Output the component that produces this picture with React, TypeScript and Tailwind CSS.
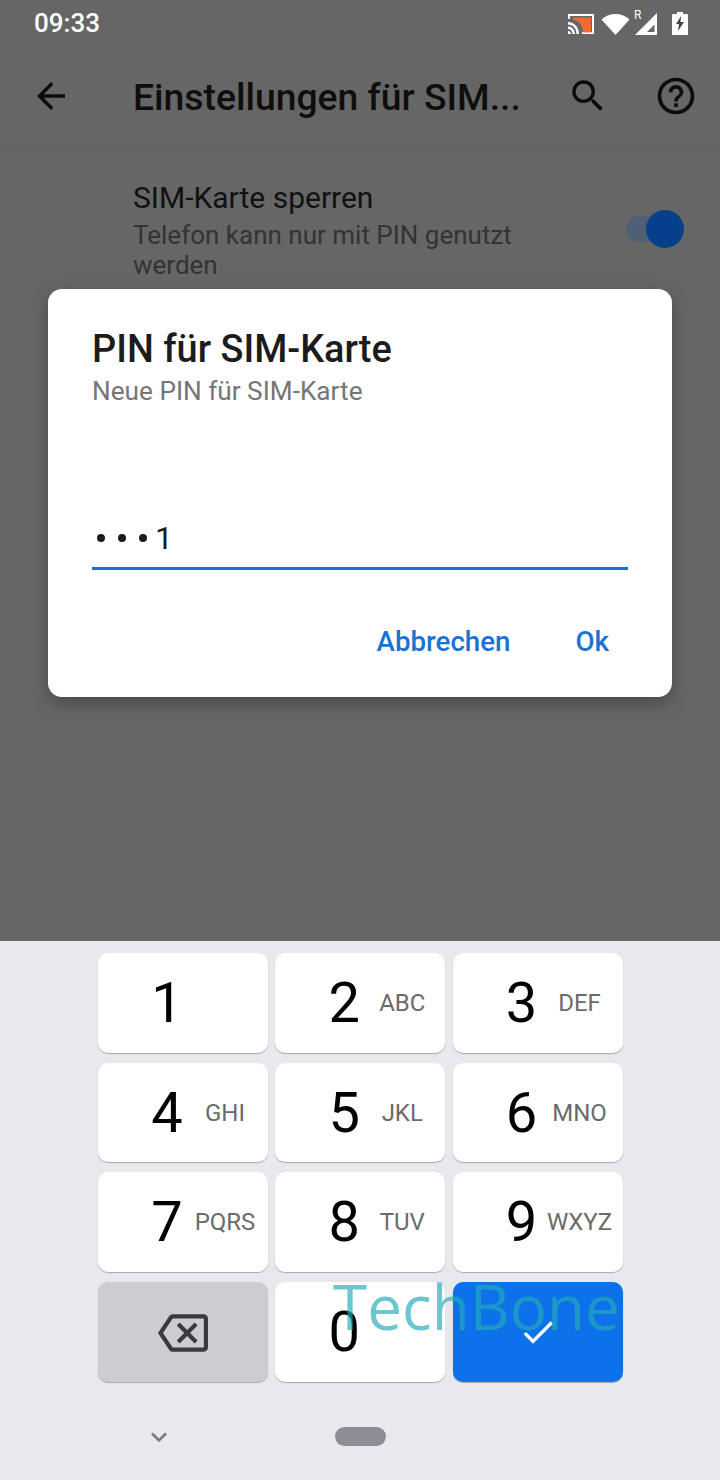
import { MdArrowBack, MdCheck, MdHelpOutline, MdKeyboardArrowDown, MdOutlineBackspace, MdSearch } from "react-icons/md";

const keys = [
  { digit: "1", label: "" },
  { digit: "2", label: "ABC" },
  { digit: "3", label: "DEF" },
  { digit: "4", label: "GHI" },
  { digit: "5", label: "JKL" },
  { digit: "6", label: "MNO" },
  { digit: "7", label: "PQRS" },
  { digit: "8", label: "TUV" },
  { digit: "9", label: "WXYZ" },
];

function StatusIcons() {
  return (
    <div className="flex items-center">
      {/* cast */}
      <svg width="28" height="22" viewBox="0 0 28 22" className="mr-[6px]">
        <path d="M1 1h26v20H15v-2h10V3H3v3H1z" fill="#fff" />
        <path d="M6 4.500h18v15H16C16 12 12 7.500 6 7z" fill="#f26a2e" />
        <path d="M1 9c6 0 11 5 11 12h-2.500C9.500 15.500 6 11.500 1 11.500zM1 13.500c4 0 7 3.500 7 7.500H5.500c0-3-2-5-4.500-5zM1 18c1.700 0 3 1.300 3 3H1z" fill="#fff" />
      </svg>
      {/* wifi */}
      <svg width="29" height="22" viewBox="0 0 29 22" className="mr-[4px]">
        <path d="M0.500 6.500C4 3 9 1 14.500 1S25 3 28.500 6.500L14.500 22z" fill="#fff" />
      </svg>
      {/* roaming signal */}
      <div className="relative mr-[14px] h-[24px] w-[24px]">
        <span className="absolute left-0 top-[-3px] font-['Roboto',sans-serif] text-[12px] leading-[12px] text-white">R</span>
        <svg width="24" height="24" viewBox="0 0 24 24" className="absolute left-0 top-0">
          <path d="M1 23 23 1v22z" fill="#fff" />
          <path d="M13 20 20.500 12.500V20z" fill="#666" />
        </svg>
      </div>
      {/* battery charging */}
      <svg width="16" height="23" viewBox="0 0 16 23">
        <path d="M5 0h6v2h4a1 1 0 0 1 1 1v19a1 1 0 0 1-1 1H1a1 1 0 0 1-1-1V3a1 1 0 0 1 1-1h4z" fill="#fff" />
        <path d="M9 4 4 12h3l-1 7 6-9H8.500z" fill="#444" />
      </svg>
    </div>
  );
}

function Key({ digit, label }: { digit: string; label: string }) {
  return (
    <div className="flex h-[99.700px] items-center rounded-[10px] bg-white shadow-[0_1px_1px_#a9a9ad]">
      <span className="ml-[49px] w-[40px] text-center text-[56px] leading-none text-black">{digit}</span>
      <span className="w-[76px] text-center text-[24px] text-[#6b6b6b]">{label}</span>
    </div>
  );
}

export default function App() {
  return (
    <div className="relative flex h-[1480px] w-[720px] flex-col overflow-hidden bg-[#666666] font-['Roboto',sans-serif]">
      {/* dimmed settings page */}
      <div className="h-[941px]">
        <div className="flex h-[46px] items-center justify-between pl-[34px] pr-[32px] pt-[1px]">
          <span className="text-[26px] font-medium text-white">09:33</span>
          <StatusIcons />
        </div>
        <div className="flex h-[103px] items-center border-b border-[#5f5f5f] pb-[2px]">
          <MdArrowBack className="ml-[30px] text-[42px] text-[#0c0c0c]" />
          <span className="ml-[61px] w-[420px] pt-[3px] text-[37.300px] font-medium leading-none text-[#0e0e0e]">
            Einstellungen für SIM...
          </span>
          <MdSearch className="ml-[14px] text-[42px] text-[#0c0c0c]" />
          <MdHelpOutline className="ml-[45px] text-[44px] text-[#0c0c0c]" />
        </div>
        <div className="flex items-start pl-[133px] pr-[36px] pt-[30px]">
          <div className="w-[400px]">
            <div className="text-[30px] leading-[38px] text-[#111111]">SIM-Karte sperren</div>
            <div className="mt-[3px] text-[26px] leading-[30px] text-[#333333]">
              Telefon kann nur mit PIN genutzt werden
            </div>
          </div>
          <div className="relative ml-auto mt-[37px] h-[26px] w-[58px]">
            <div className="h-[26px] w-[46px] rounded-full bg-[#4f6076]" />
            <div className="absolute right-0 top-[-6px] h-[38px] w-[38px] rounded-full bg-[#06408a]" />
          </div>
        </div>
      </div>

      {/* keyboard */}
      <div className="flex h-[539px] flex-col bg-[#e8e8ed]">
        <div className="grid grid-cols-[170px_170px_170px] gap-x-[7.250px] gap-y-[10px] pl-[98px] pt-[12px]">
          {keys.map((key) => (
            <Key key={key.digit} digit={key.digit} label={key.label} />
          ))}
          <div className="flex h-[99.700px] items-center justify-center rounded-[10px] bg-[#cccdd2] pt-[3px] shadow-[0_1px_1px_#a9a9ad]">
            <MdOutlineBackspace className="text-[50px] text-[#3a3a3e]" />
          </div>
          <Key digit="0" label="" />
          <div className="flex h-[99.700px] items-center justify-center rounded-[10px] bg-[#0d72ea] shadow-[0_1px_1px_#a9a9ad]">
            <MdCheck className="text-[40px] text-white" />
          </div>
        </div>
        <div className="relative mt-[45px] flex h-[20px] items-center justify-center">
          <MdKeyboardArrowDown className="absolute left-[143px] text-[32px] text-[#77777d]" />
          <div className="h-[19px] w-[51px] rounded-full bg-[#8d8d95]" />
        </div>
      </div>

      {/* dialog */}
      <div className="absolute left-[48px] top-[289px] flex h-[408px] w-[624px] flex-col rounded-[14px] bg-white px-[44px] shadow-[0_6px_18px_rgba(0,0,0,0.3)]">
        <div className="mt-[35px] text-[37.900px] font-medium leading-[50px] text-[#1c1c1c]">PIN für SIM-Karte</div>
        <div className="text-[26.200px] leading-[34px] text-[#757575]">Neue PIN für SIM-Karte</div>
        <div className="mt-[116px] flex h-[46px] items-center border-b-[3px] border-[#1a6fd4] pb-[16px] pl-[5px] text-[#1c1c1c]">
          <span className="flex gap-[13px]">
            <span className="h-[8px] w-[8px] rounded-full bg-[#1c1c1c]" />
            <span className="h-[8px] w-[8px] rounded-full bg-[#1c1c1c]" />
            <span className="h-[8px] w-[8px] rounded-full bg-[#1c1c1c]" />
          </span>
          <span className="ml-[8px] text-[32px] leading-none">1</span>
        </div>
        <div className="mt-[52px] flex justify-end gap-[65px] pr-[19px] text-[27.700px] font-medium leading-[40px] text-[#1a73d4]">
          <span>Abbrechen</span>
          <span>Ok</span>
        </div>
      </div>

      {/* watermark */}
      <div className="absolute left-[333px] top-[1264px] font-['Open_Sans',sans-serif] text-[62px] font-normal leading-[84px] text-[rgba(36,170,185,0.67)]">
        TechBone
      </div>
    </div>
  );
}
